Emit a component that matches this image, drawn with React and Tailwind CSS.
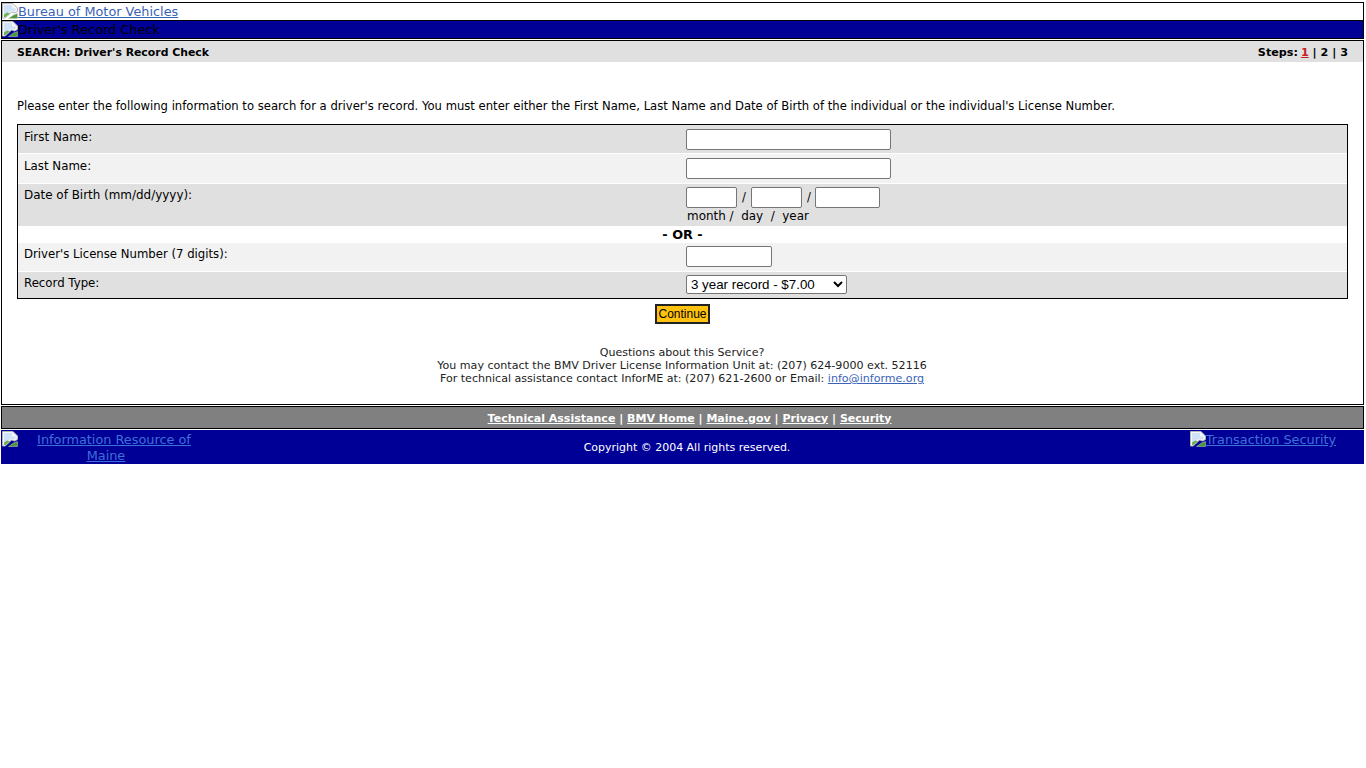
const B = ({ className = "block shrink-0" }) => (
  <svg width="16" height="16" viewBox="0 0 16 16" className={className}>
    <path d="M0.500 0.500h10.500l4.500 4.500v3.500l-3 1.500-3-1-4.500 4.500-2 1.500h-2.500z" fill="#f2f5f9" stroke="#b4b4b4" strokeWidth="1" />
    <path d="M2 2h8v3.500h3.500v2l-1.500 1-3-1-7 6.500z" fill="#cfe2f7" />
    <path d="M2 14v-2.500l3-2 3 1-4.500 3.500z" fill="#6db255" />
    <path d="M15.500 10.500v5h-9l5-3.500z" fill="#4a9a3a" stroke="#c8c8c8" strokeWidth="0.5" />
  </svg>
);

const Row = ({ bg, label, children, h, lp, ip, ls = "text-[11.7px]" }) => (
  <div className={`grid grid-cols-[662px_1fr] ${bg} ${h} mt-px first:mt-0`}>
    <div className={`pl-[6px] ${lp} ${ls}`}>{label}</div>
    <div className={`pl-[6px] ${ip}`}>{children}</div>
  </div>
);

const inp = "block h-[21px] bg-white border border-[#767676] rounded-[2px]";

export default function App() {
  return (
    <div className="bg-white min-h-[768px] pt-[2px] pl-px pr-[2px] text-[11.61px] leading-[13px] text-black font-['Verdana','DejaVu_Sans',sans-serif]">
      <div className="border border-black h-[19px] flex items-start">
        <B />
        <a className="text-[#3a63b8] underline text-[12.85px] leading-[16px] pt-px">Bureau of Motor Vehicles</a>
      </div>
      <div className="border border-black bg-[#000096] h-[19px] -mt-px flex items-start">
        <B />
        <span className="text-[#000000] text-[12.85px] leading-[16px] pt-px">Driver's Record Check</span>
      </div>
      <div className="border border-black mt-px h-[365px]">
        <div className="bg-[#e0e0e0] h-[21px] flex justify-between items-center font-bold pl-[15px] pr-[15px] pt-[2px]">
          <span className="text-[10.87px]">SEARCH: Driver's Record Check</span>
          <span className="text-[11.2px]">Steps: <a className="text-[#c62026] underline -ml-px">1</a> | 2 | 3</span>
        </div>
        <p className="mt-[38px] ml-[15px]">Please enter the following information to search for a driver's record. You must enter either the First Name, Last Name and Date of Birth of the individual or the individual's License Number.</p>
        <div className="mt-[11px] mx-[15px] border border-black">
          <Row bg="bg-[#e0e0e0]" h="h-[28px]" lp="pt-[6px]" ip="pt-[4px]" ls="text-[11.95px]" label="First Name:"><input className={`${inp} w-[205px]`} /></Row>
          <Row bg="bg-[#f2f2f2]" h="h-[29px]" lp="pt-[6px]" ip="pt-[4px]" ls="text-[11.8px]" label="Last Name:"><input className={`${inp} w-[205px]`} /></Row>
          <Row bg="bg-[#e0e0e0]" h="h-[42px]" lp="pt-[5px]" ip="pt-[3px]" ls="text-[11.95px]" label="Date of Birth (mm/dd/yyyy):">
            <div className="flex items-center gap-[5px]">
              <input className={`${inp} w-[51px]`} /><span>/</span>
              <input className={`${inp} w-[51px]`} /><span className="-mr-px">/</span>
              <input className={`${inp} w-[65px]`} />
            </div>
            <div className="mt-[2px] pl-px whitespace-pre text-[11.95px]">month /  day  /  year</div>
          </Row>
          <div className="h-[16px] text-center font-bold bg-white text-[12.8px] pt-[2px]">- OR -</div>
          <Row bg="bg-[#f2f2f2]" h="h-[28px]" lp="pt-[5px]" ip="pt-[3px]" label="Driver's License Number (7 digits):"><input className={`${inp} w-[86px]`} /></Row>
          <Row bg="bg-[#e0e0e0]" h="h-[26px]" lp="pt-[5px]" ip="pt-[3px]" ls="text-[11.75px]" label="Record Type:">
            <select className="block w-[161px] h-[19px] bg-white border border-[#767676] rounded-[2px] text-[13.33px] font-['Liberation_Sans',sans-serif]">
              <option>3 year record - $7.00</option>
            </select>
          </Row>
        </div>
        <div className="flex justify-center mt-[5px]">
          <button className="w-[55px] h-[20px] bg-[#ffc20e] border-2 border-[#222222] text-[12px] leading-[14px] font-['Liberation_Sans',sans-serif]">Continue</button>
        </div>
        <div className="mt-[22px] text-center text-[11.07px] leading-[13px] text-[#222222] pr-[1px]">
          <div>Questions about this Service?</div>
          <div>You may contact the BMV Driver License Information Unit at: (207) 624-9000 ext. 52116</div>
          <div>For technical assistance contact InforME at: (207) 621-2600 or Email: <a className="text-[#3a63b8] underline">info@informe.org</a></div>
        </div>
      </div>
      <div className="border border-black bg-[#808080] h-[23px] mt-px flex items-center justify-center font-bold text-white text-[11.04px] pl-[14px] pt-px">
        <span><a className="underline">Technical Assistance</a> | <a className="underline">BMV Home</a> | <a className="underline">Maine.gov</a> | <a className="underline">Privacy</a> | <a className="underline">Security</a></span>
      </div>
      <div className="bg-[#000096] h-[34px] mt-px flex items-start text-white">
        <div className="w-[209px] pl-px pt-[2px] text-center text-[12.85px] leading-[16px]">
          <B className="float-left -mt-px" />
          <a className="text-[#3f6fd8] underline">Information Resource of Maine</a>
        </div>
        <div className="flex-1 text-center text-[10.97px] pt-[11px]">Copyright © 2004 All rights reserved.</div>
        <div className="w-[200px] flex justify-center items-start pt-px pr-[2px]">
          <B />
          <a className="text-[#3f6fd8] underline text-[12.85px] leading-[16px] pt-px">Transaction Security</a>
        </div>
      </div>
    </div>
  );
}
